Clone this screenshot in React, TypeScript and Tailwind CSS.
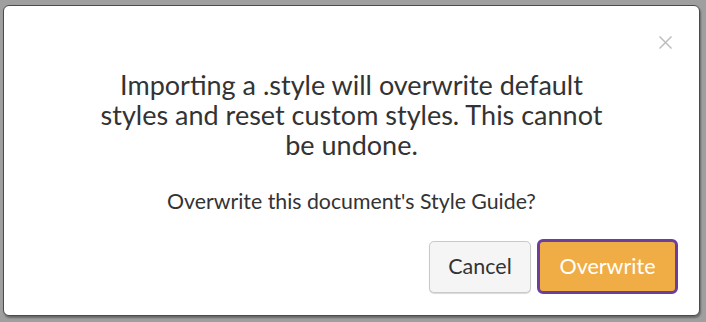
import React from 'react';

export default function App() {
  return (
    <div
      className="w-[706px] h-[322px] bg-[#9f9f9f] pt-[5px] pl-[3px] overflow-hidden"
      style={{ fontFamily: 'Lato, "Open Sans", sans-serif' }}
    >
      <div className="relative w-[697px] h-[311px] bg-white border border-[#4b4b4b] rounded-[6px] shadow-[1px_2px_2px_rgba(0,0,0,0.35)]">
        <button className="absolute right-[27px] top-[30px] w-[13px] h-[13px] flex items-center justify-center">
          <svg width="13" height="13" viewBox="0 0 13 13" fill="none" stroke="#bdbdbd" strokeWidth="1.5">
            <path d="M0.5 0.5L12.5 12.5M12.5 0.5L0.5 12.5" />
          </svg>
        </button>

        <div className="flex flex-col items-center pt-[64px]">
          <h2 className="w-[520px] text-center text-[27px] leading-[30px] text-[#333333] font-normal">
            Importing a .style will overwrite default styles and reset custom styles. This cannot be undone.
          </h2>
          <p className="mt-[29px] text-[21.3px] leading-[24px] text-[#333333]">
            Overwrite this document's Style Guide?
          </p>
        </div>

        <div className="absolute right-[21px] bottom-[21px] flex items-center gap-[6px]">
          <button className="w-[102px] h-[52px] rounded-[5px] border border-[#c9c9c9] bg-[#f5f5f5] shadow-[0_1px_1px_rgba(0,0,0,0.15)] text-[21.5px] text-[#333333]">
            Cancel
          </button>
          <button className="w-[141px] h-[55px] rounded-[6px] border-[3px] border-[#6e3e9c] bg-[#f0ad45] text-[21.5px] text-white">
            Overwrite
          </button>
        </div>
      </div>
    </div>
  );
}
